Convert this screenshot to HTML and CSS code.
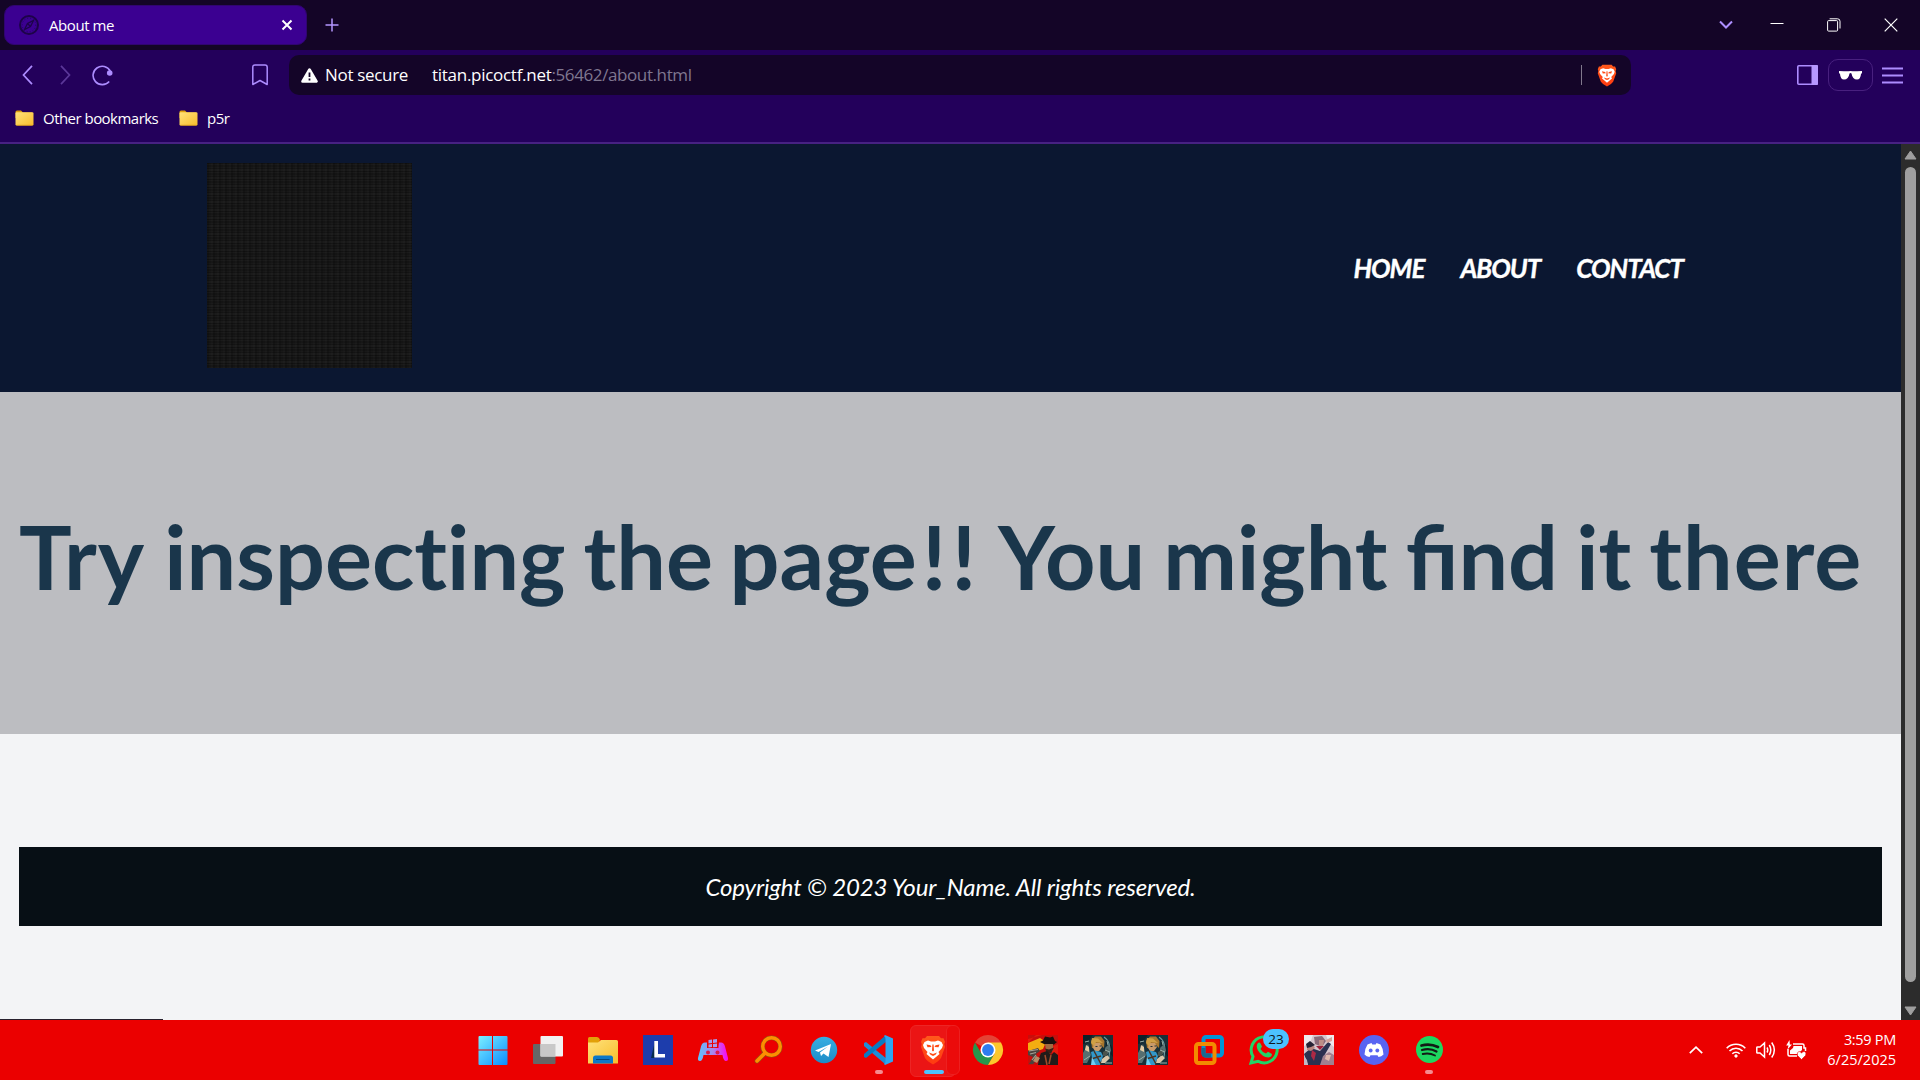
FILE: index.html
```html
<!DOCTYPE html>
<html lang="en">
<head>
<meta charset="utf-8">
<title>About me</title>
<link rel="stylesheet" href="styles.css">
</head>
<body>
<svg class="defs" width="0" height="0" aria-hidden="true">
  <defs>
    <linearGradient id="folderFill" x1="0" y1="0" x2="1" y2="1"><stop offset="0" stop-color="#ffe27a"/><stop offset="1" stop-color="#f8bd2c"/></linearGradient>
    <linearGradient id="winFill" x1="0" y1="0" x2="1" y2="1" ><stop offset="0" stop-color="#7cf0ff"/><stop offset="1" stop-color="#0a8bff"/></linearGradient>
    <linearGradient id="padFill" x1="0" y1="0" x2="1" y2="0"><stop offset="0" stop-color="#5cc4ff"/><stop offset=".5" stop-color="#a886ec"/><stop offset="1" stop-color="#ff00f0"/></linearGradient>
    <linearGradient id="tgFill" x1="0" y1="0" x2="0" y2="1"><stop offset="0" stop-color="#36aee2"/><stop offset="1" stop-color="#1c8cc8"/></linearGradient>
    <linearGradient id="braveFill" x1="0" y1="0" x2="0" y2="1"><stop offset="0" stop-color="#ff5a1c"/><stop offset="1" stop-color="#ff3a10"/></linearGradient>
    <symbol id="folder" viewBox="0 0 19 16">
      <path d="M.5 2Q.5.5 2 .5H6L8 2.5H17V8H.5Z" fill="#dfa00e"/>
      <rect x=".5" y="2.3" width="18" height="13.2" rx="1.2" fill="url(#folderFill)"/>
      <path d="M1.5 15.3H17.5" stroke="#d99a1a" stroke-width=".8"/>
    </symbol>
    <symbol id="lion" viewBox="0 0 26 30">
      <path d="M7 1H19L21 3.3L23.5 3.2L25 7L24.2 9L25 12L21 23Q19 26 13 29.5Q7 26 5 23L1 12L1.8 9L1 7L2.5 3.2L5 3.3Z" fill="url(#braveFill)"/>
      <path d="M8 5.500L11 6.500H15L18 5.500L21.500 7L23 10L22 13L18.500 17L19.500 19L16 22L13 24.500L10 22L6.500 19L7.500 17L4 13L3 10L4.500 7Z" fill="#fff"/>
      <path d="M6.500 9.500L10.500 10.300L11.500 12L7.500 12.300ZM19.500 9.500L15.500 10.300L14.500 12L18.500 12.300ZM12.400 9.500H13.600L14 15.500L13 16.500L12 15.500ZM9 17.500L13 19L17 17.500L15.500 19.800L13 21L10.500 19.800Z" fill="#ff4b14"/>
    </symbol>
    <symbol id="archer" viewBox="0 0 30 30">
      <rect width="30" height="30" fill="#183038"/>
      <path d="M0 0H10L4 8L0 9ZM22 2L29 12L30 22L24 14Z" fill="#0d2129"/>
      <path d="M21 2Q29 7 26 22" fill="none" stroke="#6c9aa0" stroke-width="1.100"/>
      <path d="M0 18L5 9L8 20L4 28H0ZM22 13L26 9L28 16L23 20Z" fill="#566f70"/>
      <path d="M3 10L6 12L6 17L2 15Z" fill="#e3cba2"/>
      <path d="M8 6L12 1.500H18L21.500 6L21 13L18 10L12 13L9 13Z" fill="#a8762d"/>
      <path d="M11 8L17 8L19 12L16 16H12L10 13Z" fill="#c99a69"/>
      <path d="M9 3L15 3.500L20 8L13 7L11 11L8 8Z" fill="#d0a045"/>
      <path d="M12.500 11.500H14.500M16.500 11H18.500" stroke="#253338"/>
      <path d="M8 17L12 15.500L18 17L20 21L17 30H9L9 23Z" fill="#3298c9"/>
      <path d="M11 16L18 29M8 24L18 21" stroke="#4b3422" stroke-width="1.500"/>
      <path d="M9 22L13 30H8Z" fill="#72d0f2"/>
      <path d="M19 24L24 20L27 23L22 28L18 28Z" fill="#d8c7aa"/>
      <path d="M20 17L25 14L24 21L20 21Z" fill="#49534c"/>
      <path d="M1 25L7 21M22 15L27 17M2 7L6 6M22 28L29 28M24 6L25 10" stroke="#9db3aa" stroke-width="1"/>
    </symbol>
  </defs>
</svg>

<div class="tabstrip">
  <div class="tab">
    <svg class="favicon" width="20" height="20" viewBox="0 0 20 20" fill="none" stroke="#1d0349"><circle cx="10" cy="10" r="9" stroke-width="2"/><circle cx="10" cy="10" r="6.800" stroke-width=".7" stroke-dasharray="1 2"/><path d="M14.500 5.500L11.500 11.500L5.500 14.500L8.500 8.500ZM8.500 8.500L11.500 11.500" stroke-width="1.300"/></svg>
    <span class="tab-title">About me</span>
    <svg width="12" height="12" viewBox="0 0 12 12"><path d="M1.500 1.500L10.500 10.500M10.500 1.500L1.500 10.500" stroke="#fff" stroke-width="2"/></svg>
  </div>
  <svg class="newtab" width="14" height="14" viewBox="0 0 14 14"><path d="M7 .5V13.500M.5 7H13.500" stroke="#b496ff" stroke-width="1.500"/></svg>
  <div class="window-controls">
    <svg width="14" height="10" viewBox="0 0 14 10"><path d="M1 1.500L7 7.500L13 1.500" fill="none" stroke="#ad8fff" stroke-width="2"/></svg>
    <svg width="14" height="14" viewBox="0 0 14 14"><path d="M.5 5.500H13.500" stroke="#fff"/></svg>
    <svg width="14" height="14" viewBox="0 0 14 14" fill="none" stroke="#fff"><rect x=".6" y="2.600" width="10" height="10.500" rx="1"/><path d="M2.600 .8H10.500Q13 .8 13 3.300V10.500" /></svg>
    <svg width="14" height="14" viewBox="0 0 14 14"><path d="M.7.7L13.300 13.300M13.300.7L.7 13.300" stroke="#fff" stroke-width="1.200"/></svg>
  </div>
</div>

<div class="toolbar">
  <svg class="back" width="12" height="20" viewBox="0 0 12 20"><path d="M10 .8L1.500 10L10 19.200" fill="none" stroke="#ad8cff" stroke-width="1.700"/></svg>
  <svg class="forward" width="12" height="20" viewBox="0 0 12 20"><path d="M2 .8L10.500 10L2 19.200" fill="none" stroke="#5b3799" stroke-width="1.700"/></svg>
  <svg class="reload" width="22" height="21" viewBox="0 0 22 21"><path d="M19.300 6A9.200 9.200 0 1 0 18.200 16.500" fill="none" stroke="#ad8cff" stroke-width="1.600"/><circle cx="18.700" cy="8" r="2.800" fill="#ad8cff"/></svg>
  <svg class="bookmark" width="16" height="22" viewBox="0 0 16 22"><path d="M3 1H13Q15.200 1 15.200 3.200V20.500L8 16.500L.8 20.500V3.200Q.8 1 3 1Z" fill="none" stroke="#ad8cff" stroke-width="1.500" stroke-linejoin="round"/></svg>
  <div class="address">
    <svg width="17" height="15" viewBox="0 0 17 15"><path d="M8.500 1.500L15.500 13.500H1.500Z" fill="#fff" stroke="#fff" stroke-width="2.600" stroke-linejoin="round"/><path d="M8.500 4.500V9M8.500 10.500V12.500" stroke="#140528" stroke-width="1.800"/></svg>
    <span class="insecure">Not secure</span>
    <span class="url"><span class="host">titan.picoctf.net</span><span class="path">:56462/about.html</span></span>
    <i class="rule"></i>
    <svg width="20" height="23" viewBox="0 0 26 30" preserveAspectRatio="none"><use href="#lion" width="26" height="30"/></svg>
  </div>
  <div class="tools">
    <svg width="21" height="20" viewBox="0 0 21 20"><rect x=".8" y=".8" width="19.400" height="18.400" rx="1" fill="none" stroke="#ad8cff" stroke-width="1.600"/><path d="M14.500 0H20Q21 0 21 1V19Q21 20 20 20H14.500Z" fill="#b697ff"/></svg>
    <div class="glasses"><svg width="23" height="9" viewBox="0 0 23 9"><path d="M0 0Q5 .3 9.500 .3Q11.500-.2 13.500.3Q18 .3 23 0V2L22 3Q21.500 8.500 18 8.500Q13.500 8.500 12.500 2.500Q11.500 1.500 10.500 2.500Q9.500 8.500 5 8.500Q1.500 8.500 1 3L0 2Z" fill="#fff"/></svg></div>
    <svg width="21" height="17" viewBox="0 0 21 17"><path d="M0 1.500H21M0 8.500H21M0 15.500H21" stroke="#ad8cff" stroke-width="1.800"/></svg>
  </div>
</div>

<div class="bookmarks">
  <svg width="19" height="16"><use href="#folder"/></svg><span class="bm-other">Other bookmarks</span>
  <svg width="19" height="16"><use href="#folder"/></svg><span>p5r</span>
</div>

<div class="viewport">
  <div class="page">
    <header class="site-header">
      <div class="logo"></div>
      <nav class="nav"><a>HOME</a><a>ABOUT</a><a>CONTACT</a></nav>
    </header>
    <section class="hero">
      <h1><span class="loose">Try</span> <span class="after-loose">inspecting</span> the <span class="tuck">page</span><span class="bangs">!!</span> <span class="tuck">You</span> might <span class="lig">find</span> it <span class="loose">there</span></h1>
    </section>
    <footer class="site-footer"><span>Copyright © 2023 Your_Name. All rights reserved.</span></footer>
    <i class="status-edge"></i>
  </div>
  <div class="scrollbar">
    <svg width="13" height="10" viewBox="0 0 13 10"><path d="M6.500 1L12 9H1Z" fill="#9f9f9f" stroke="#9f9f9f" stroke-linejoin="round"/></svg>
    <i class="thumb"></i>
    <svg width="13" height="10" viewBox="0 0 13 10"><path d="M6.500 9L12 1H1Z" fill="#9f9f9f" stroke="#9f9f9f" stroke-linejoin="round"/></svg>
  </div>
</div>

<div class="taskbar">
  <div class="apps">
    <div class="app"><svg viewBox="0 0 30 30"><path d="M1.500 1H14V14.500H.5V2Q.5 1 1.500 1ZM15 1H28.500Q29.500 1 29.500 2V14.500H15ZM.5 15.500H14V30H1.500Q.5 30 .5 29ZM15 15.500H29.500V29Q29.500 30 28.500 30H15Z" fill="url(#winFill)"/></svg></div>
    <div class="app"><svg viewBox="0 0 30 30"><rect y="9" width="22.500" height="20" rx="1" fill="#666"/><rect x="7.500" y="1" width="22.500" height="20.500" rx="1" fill="#f1f1f1"/><path d="M7.500 9H22.500V21.500H7.500Z" fill="#c8c8c8"/></svg></div>
    <div class="app"><svg viewBox="0 0 30 30"><path d="M0 3.500Q0 2 1.500 2H9Q11 2 12 4.500L11 8H0Z" fill="#e2a009"/><path d="M0 7.500H10L13 5H28.500Q30 5 30 6.500V28.500H0Z" fill="url(#folderFill)"/><path d="M5 28.500V23Q5 20.500 7.500 20.500H22.500Q25 20.500 25 23V28.500Z" fill="#0d78c8"/><path d="M8 24.500H21.500" stroke="#06477e"/></svg></div>
    <div class="app"><svg viewBox="0 0 30 30"><rect width="30" height="30" fill="#1d3dac"/><path d="M12 6L8 23H12Z" fill="#082d4c"/><path d="M11.300 6H15V19H22V22.500H11.300Z" fill="#fff"/></svg></div>
    <div class="app"><svg viewBox="0 0 30 30"><path d="M7 7.500H9L10 11H20L21 7.500H23Q26 7.500 27 11.500L30 23Q30.500 26 28 26Q25.500 26 24.500 20H5.500Q4.500 26 2 26Q-.5 26 0 23L3 11.500Q4 7.500 7 7.500Z" fill="url(#padFill)"/><path d="M9 3.500H20.500V13H9Z" fill="#eb0000"/><path d="M10.500 5L14 4.500V8L10.500 8.500ZM15 4.400L19 4V7.500L15 8ZM10.500 9.500L14 9V12L10.500 12.500ZM15 9L19 8.500V12L15 12.300Z" fill="#a59bee"/><circle cx="10" cy="17.500" r="2" fill="#dc1b48"/><circle cx="19.500" cy="17.500" r="2" fill="#dc1b48"/></svg></div>
    <div class="app"><svg viewBox="0 0 30 30" fill="none"><circle cx="18.500" cy="11.500" r="8.800" stroke="#8d5711" stroke-width="4.400"/><path d="M12 18L4 26" stroke="#8d5711" stroke-width="4.600" stroke-linecap="round"/><circle cx="18.500" cy="11.500" r="8.800" stroke="#ff8e00" stroke-width="3.400"/><path d="M12 18L4 26" stroke="#ff8e00" stroke-width="3.500" stroke-linecap="round"/></svg></div>
    <div class="app"><svg viewBox="0 0 30 30"><circle cx="16" cy="15" r="13.200" fill="url(#tgFill)"/><path d="M7 15.500L23 9L20.500 22L15.500 18.500L13 21L12 17.500L20 11.500L10.500 17Z" fill="#fff"/></svg></div>
    <div class="app"><svg viewBox="0 0 30 30"><path d="M1 8L3 7L24 24L22 29L1 11Z" fill="#1d8ed8"/><path d="M1 22L3 23L24 6L22 1L1 19Z" fill="#087bc3"/><path d="M22 0L30 3.500V26.500L22 30L21 29Q22.500 28 22.500 26V4Q22.500 2 21 1Z" fill="#2ba6f2"/></svg><i class="dot"></i></div>
    <div class="app active"><i class="stack"></i><svg viewBox="0 0 30 30"><use href="#lion" x="2" y="0" width="26" height="30"/></svg><i class="bar"></i></div>
    <div class="app"><svg viewBox="0 0 30 30"><path d="M15 15L2 7.500A15 15 0 0 1 28 7.500Z" fill="#e44335"/><path d="M2 7.500A15 15 0 0 0 15 30L21.500 18.700L15 15L8.500 18.700Z" fill="#27964c"/><path d="M15 7.500H28A15 15 0 0 1 15 30L21.500 18.700Z" fill="#fcc72c"/><circle cx="15" cy="15" r="7.500" fill="#fff"/><circle cx="15" cy="15" r="5.900" fill="#2e7cf0"/></svg></div>
    <div class="app"><svg viewBox="0 0 30 30"><rect width="30" height="30" fill="#c80d0b"/><path d="M0 8L12 3L18 7L15 14L4 18L0 15Z" fill="#f4ad11"/><path d="M0 4L14 0H8L0 8ZM23 12L30 9V20L25 21Z" fill="#e51a0c"/><path d="M12 7L15 5.500L17 1.500L22 2.500L25 1.500L27 6L29 7L26 9.500L17 9.500Z" fill="#18100e"/><path d="M17 9H25L25 15L22 19L18 16Z" fill="#a26b42"/><path d="M17 13.500L21 14.500L26 12.500L23 18.500H19Z" fill="#382017"/><path d="M13 18L19 16L23 20L26 17L30 20V30H10L11 23Z" fill="#211b19"/><path d="M0 16L10 13L12 16L8 19L10 24L5 29H1L5 22L0 20Z" fill="#4b423d"/><path d="M1 16L10 14.500M2 19L8 17.500M4 25L8 20" stroke="#a7a095" stroke-width="1.200"/><path d="M8 21L12 23L9 28L5 26Z" fill="#b98b67"/><path d="M17 20L19 30M23 20L21 29" stroke="#a24b2a" stroke-width="1.500"/></svg></div>
    <div class="app"><svg viewBox="0 0 30 30"><use href="#archer"/></svg></div>
    <div class="app"><svg viewBox="0 0 30 30"><use href="#archer"/></svg></div>
    <div class="app"><svg viewBox="0 0 30 30" fill="none" stroke-width="4"><rect x="9.500" y="2" width="18.500" height="18.500" rx="2.500" stroke="#0095d6"/><rect x="2" y="9" width="18.500" height="19" rx="2.500" stroke="#f38b00"/><path d="M9.500 13V18Q9.500 20.500 12 20.500H17" stroke="#196a91"/></svg></div>
    <div class="app"><svg viewBox="0 0 30 30"><path d="M2 28L4 21.500A13 13 0 1 1 9 26.300Z" fill="none" stroke="#20d466" stroke-width="3"/><path d="M9 8Q10.500 7 11.500 8.500L13 11.500L11.500 14Q13.500 17.500 17 18.500L19 16.800L23 19Q23 22 19.500 22.500Q13 22 9 15.500Q6.500 11 9 8Z" fill="#20d466"/></svg><span class="badge">23</span></div>
    <div class="app"><svg viewBox="0 0 30 30"><rect width="30" height="30" fill="#d6c6cd"/><path d="M0 0H9L6 8L0 11ZM22 0H30V12L25 8Z" fill="#eee9ec"/><path d="M10 2L18 1L22 6L18 12L11 9Z" fill="#8a6a78"/><path d="M15 5L20 5L19 11L15 12Z" fill="#bd8e87"/><path d="M0 19L7 13L16 16L24 7L27 9L20 21L17 30H4Z" fill="#2b3150"/><path d="M8 15L12 18L10 26L7 21Z" fill="#ad2945"/><path d="M3 10L8 8L11 13L7 16L3 15Z" fill="#ba8780"/><path d="M2 9L6 6L11 10L7 12L3 13Z" fill="#262335"/><path d="M23 8L22 5L28 2L28 6Z" fill="#d5a49a"/><path d="M19 21L25 17L30 20V30H16Z" fill="#a0818f"/><path d="M22 20L27 20L25 26L21 24Z" fill="#e0bbae"/><path d="M0 21L3 25L4 30H0Z" fill="#c3b9c5"/><path d="M12 11L20 11L16 15Z" fill="#9c213d"/></svg></div>
    <div class="app"><svg viewBox="0 0 30 30"><circle cx="15" cy="15" r="15" fill="#5864f2"/><path d="M8.500 9.500L12.500 8L13.300 9.500H16.700L17.500 8L21.500 9.500Q24.500 14 24.500 19.500Q22.500 21.500 19.500 22L18.500 20.300H11.500L10.500 22Q7.500 21.500 5.500 19.500Q5.500 14 8.500 9.500Z" fill="#fff"/><ellipse cx="11.700" cy="15.500" rx="1.900" ry="2.100" fill="#5864f2"/><ellipse cx="18.300" cy="15.500" rx="1.900" ry="2.100" fill="#5864f2"/></svg></div>
    <div class="app"><svg viewBox="0 0 30 30"><circle cx="15.500" cy="14.500" r="13.500" fill="#1ed760"/><g fill="none" stroke="#121b16" stroke-linecap="round"><path d="M7.500 10.500Q16 8 24 12" stroke-width="2.700"/><path d="M8 15Q16 12.700 22.500 16.500" stroke-width="2.200"/><path d="M8.700 19Q15.500 17.500 21 20.500" stroke-width="1.800"/></g></svg><i class="dot"></i></div>
  </div>
  <div class="tray">
    <svg width="14" height="8" viewBox="0 0 14 8"><path d="M.8 7.200L7 1.200L13.200 7.200" fill="none" stroke="#fff" stroke-width="1.700"/></svg>
    <svg class="wifi" width="20" height="16" viewBox="0 0 20 16" fill="none" stroke="#fff" stroke-width="1.600"><path d="M.7 6.200A13 13 0 0 1 19.300 6.200M3.500 9A9 9 0 0 1 16.500 9M6.300 11.800A5.200 5.200 0 0 1 13.700 11.800"/><circle cx="10" cy="14" r="1.200" fill="#fff" stroke-width="1"/></svg>
    <svg class="sound" width="20" height="18" viewBox="0 0 20 18" fill="none" stroke="#fff" stroke-width="1.500"><path d="M.8 6.500Q.8 6 1.500 6H4L8.500 2V16L4 12H1.500Q.8 12 .8 11.500ZM11 6.500Q12.500 9 11 11.500M13.300 4Q16.300 9 13.300 14M15.700 1.500Q21 9 15.700 16.500"/></svg>
    <svg class="battery" width="21" height="20" viewBox="0 0 21 20"><path d="M7 4H16.500Q18 4 18 5.500V8H19.500V11M2 9V14.500Q2 16 3.500 16H11" fill="none" stroke="#fff" stroke-width="1.500"/><path d="M7.500 6H16V10L11.500 14H4V10.500L7 8Z" fill="#fff"/><path d="M3.500 0L.2 5.500H2.500L1.500 9.500L6 4.500H3.800Z" fill="#fff"/><path d="M15.500 19.500L11.500 15.500Q10.500 12 13 11.500Q15 11.500 15.500 13.200Q16 11.500 18.300 11.500Q21 12.500 19.500 15.500Z" fill="#fff" stroke="#eb0000" stroke-width=".6"/></svg>
    <div class="clock"><span class="time">3:59 PM</span><span>6/25/2025</span></div>
  </div>
</div>
</body>
</html>
```
FILE: styles.css
```css
* { box-sizing: border-box; }
body {
  margin: 0;
  width: 1920px;
  height: 1080px;
  overflow: hidden;
  display: flex;
  flex-direction: column;
  font-family: "Open Sans", "Noto Sans", sans-serif;
  color: #fff;
  background: #f3f4f6;
}
svg { display: block; flex: none; }
span, a { white-space: nowrap; }
.defs { position: absolute; }

/* Browser chrome */
.tabstrip {
  height: 50px;
  flex: none;
  display: flex;
  align-items: center;
  background: #140527;
  padding-left: 4px;
}
.tab {
  width: 303px;
  height: 40px;
  border-radius: 10px;
  background: #3b0091;
  display: flex;
  align-items: center;
  padding: 0 13px 0 14px;
  gap: 10px;
  border: 1px solid #300570;
}
.tab-title { flex: 1; font-size: 15px; line-height: 20px; letter-spacing: -.42px; padding-bottom: 1px; }
.newtab { margin-left: 18px; }
.window-controls { margin-left: auto; padding-right: 22px; display: flex; align-items: center; gap: 43px; }
.window-controls svg:first-child { margin-right: -6px; }
.toolbar {
  height: 50px;
  flex: none;
  display: flex;
  align-items: center;
  background: #23005b;
  padding-left: 22px;
}
.forward { margin-left: 25px; }
.reload { margin-left: 20px; }
.bookmark { margin-left: 139px; }
.address {
  width: 1342px;
  height: 40px;
  margin-left: 21px;
  padding: 0 14px 0 12px;
  border-radius: 10px;
  background: #140528;
  display: flex;
  align-items: center;
  font-size: 17px;
  line-height: 24px;
  letter-spacing: -.32px;
}
.insecure { width: 107px; margin-left: 7px; }
.url { flex: 1; }
.host { letter-spacing: -.28px; }
.path { color: #7f7790; letter-spacing: -.4px; }
.rule { width: 1px; height: 20px; background: #81788c; margin-right: 15px; }
.tools { margin-left: auto; padding-right: 17px; display: flex; align-items: center; gap: 9px; }
.tools svg:first-child { margin-right: 1px; }
.glasses {
  width: 45px;
  height: 32px;
  border: 1px solid #48207f;
  border-radius: 10px;
  display: flex;
  align-items: center;
  justify-content: center;
}
.glasses svg:first-child { margin-right: 0; }
.bookmarks {
  height: 44px;
  flex: none;
  display: flex;
  align-items: center;
  background: #23005b;
  border-bottom: 2px solid #472182;
  padding: 0 0 6px 15px;
  font-size: 15px;
  line-height: 20px;
  letter-spacing: -.53px;
}
.bookmarks span { margin-left: 9px; }
.bookmarks .bm-other { width: 136px; }

/* Site */
.viewport { height: 876px; flex: none; display: flex; }
.page {
  width: 1901px;
  position: relative;
  background: #f3f4f6;
  font-family: Lato, sans-serif;
}
.site-header {
  height: 248px;
  background: #0b1731;
  display: flex;
  justify-content: space-between;
  padding: 19px 218px 0 207px;
}
.logo {
  width: 205px;
  height: 205px;
  background:
    repeating-linear-gradient(90deg, rgba(0,0,0,.16) 0 2px, transparent 2px 4px, rgba(255,255,255,.01) 4px 6px),
    repeating-linear-gradient(180deg, #121212 0 1px, #1a1a1a 1px 2px, #141414 2px 4px, #181818 4px 5px, #131313 5px 6px, #1b1b1b 6px 8px);
}
.nav {
  height: 210px;
  display: flex;
  align-items: center;
  gap: 36px;
  font-size: 26px;
  font-weight: 700;
  font-style: italic;
  letter-spacing: -1px;
  -webkit-text-stroke: .35px #fff;
}
.hero {
  height: 342px;
  background: #bcbdc1;
  display: flex;
  align-items: center;
  padding: 0 0 14px 19px;
}
.hero h1 {
  margin: 0;
  font-size: 88px;
  line-height: 106px;
  font-weight: 700;
  color: #1a364b;
  white-space: nowrap;
  word-spacing: -3.3px;
  font-variant-ligatures: none;
}
.hero .lig { font-variant-ligatures: normal; }
.loose { letter-spacing: 1px; }
.after-loose { margin-left: 1px; }
.tuck { margin-left: -1.5px; }
.bangs { margin-left: 5px; letter-spacing: 5px; }
.site-footer {
  height: 79px;
  margin: 113px 19px 0;
  background: #070f15;
  display: flex;
  align-items: center;
  justify-content: center;
  font-size: 24px;
  font-style: italic;
  letter-spacing: -.15px;
}
.status-edge { position: absolute; left: 0; bottom: 0; width: 163px; height: 1px; background: #28202d; }
.scrollbar {
  width: 19px;
  background: #2c2c2c;
  display: flex;
  flex-direction: column;
  align-items: center;
  padding: 6px 0 4px;
}
.thumb { width: 11px; height: 815px; margin: 7px 0 auto; border-radius: 6px; background: #9f9f9f; }

/* Taskbar */
.taskbar {
  height: 60px;
  flex: none;
  display: flex;
  background: #eb0000;
  padding-left: 465px;
}
.apps { display: flex; }
.app {
  width: 55.080px;
  height: 60px;
  position: relative;
  display: flex;
  align-items: center;
  justify-content: center;
}
.app svg { width: 30px; height: 30px; overflow: visible; position: relative; }
.app.active::before {
  content: "";
  position: absolute;
  left: 4px;
  top: 5px;
  width: 44px;
  height: 50px;
  border-radius: 6px;
  background: #eb1515;
  border: 1px solid #ed2525;
}
.stack {
  position: absolute;
  left: 40px;
  top: 5px;
  width: 14px;
  height: 50px;
  border-radius: 6px;
  background: #eb0b0b;
  border: 1px solid #ed2020;
}
.dot, .bar { position: absolute; bottom: 6px; height: 4px; border-radius: 2px; }
.dot { left: 24px; width: 8px; background: #f58a8f; }
.bar { left: 18px; width: 20px; background: #4cc2ff; }
.badge {
  position: absolute;
  left: 27px;
  top: 9px;
  width: 26px;
  height: 20px;
  border-radius: 10px;
  background: #4cc2ff;
  color: #101820;
  font-size: 13.500px;
  line-height: 20px;
  text-align: center;
}
.tray { margin-left: auto; padding-right: 24px; display: flex; align-items: center; }
.wifi { margin-left: 23px; }
.sound { margin-left: 10px; }
.battery { margin-left: 10px; }
.clock { width: 89px; display: flex; flex-direction: column; align-items: flex-end; font-size: 14.500px; line-height: 20px; }
.time { letter-spacing: -.3px; }
```
